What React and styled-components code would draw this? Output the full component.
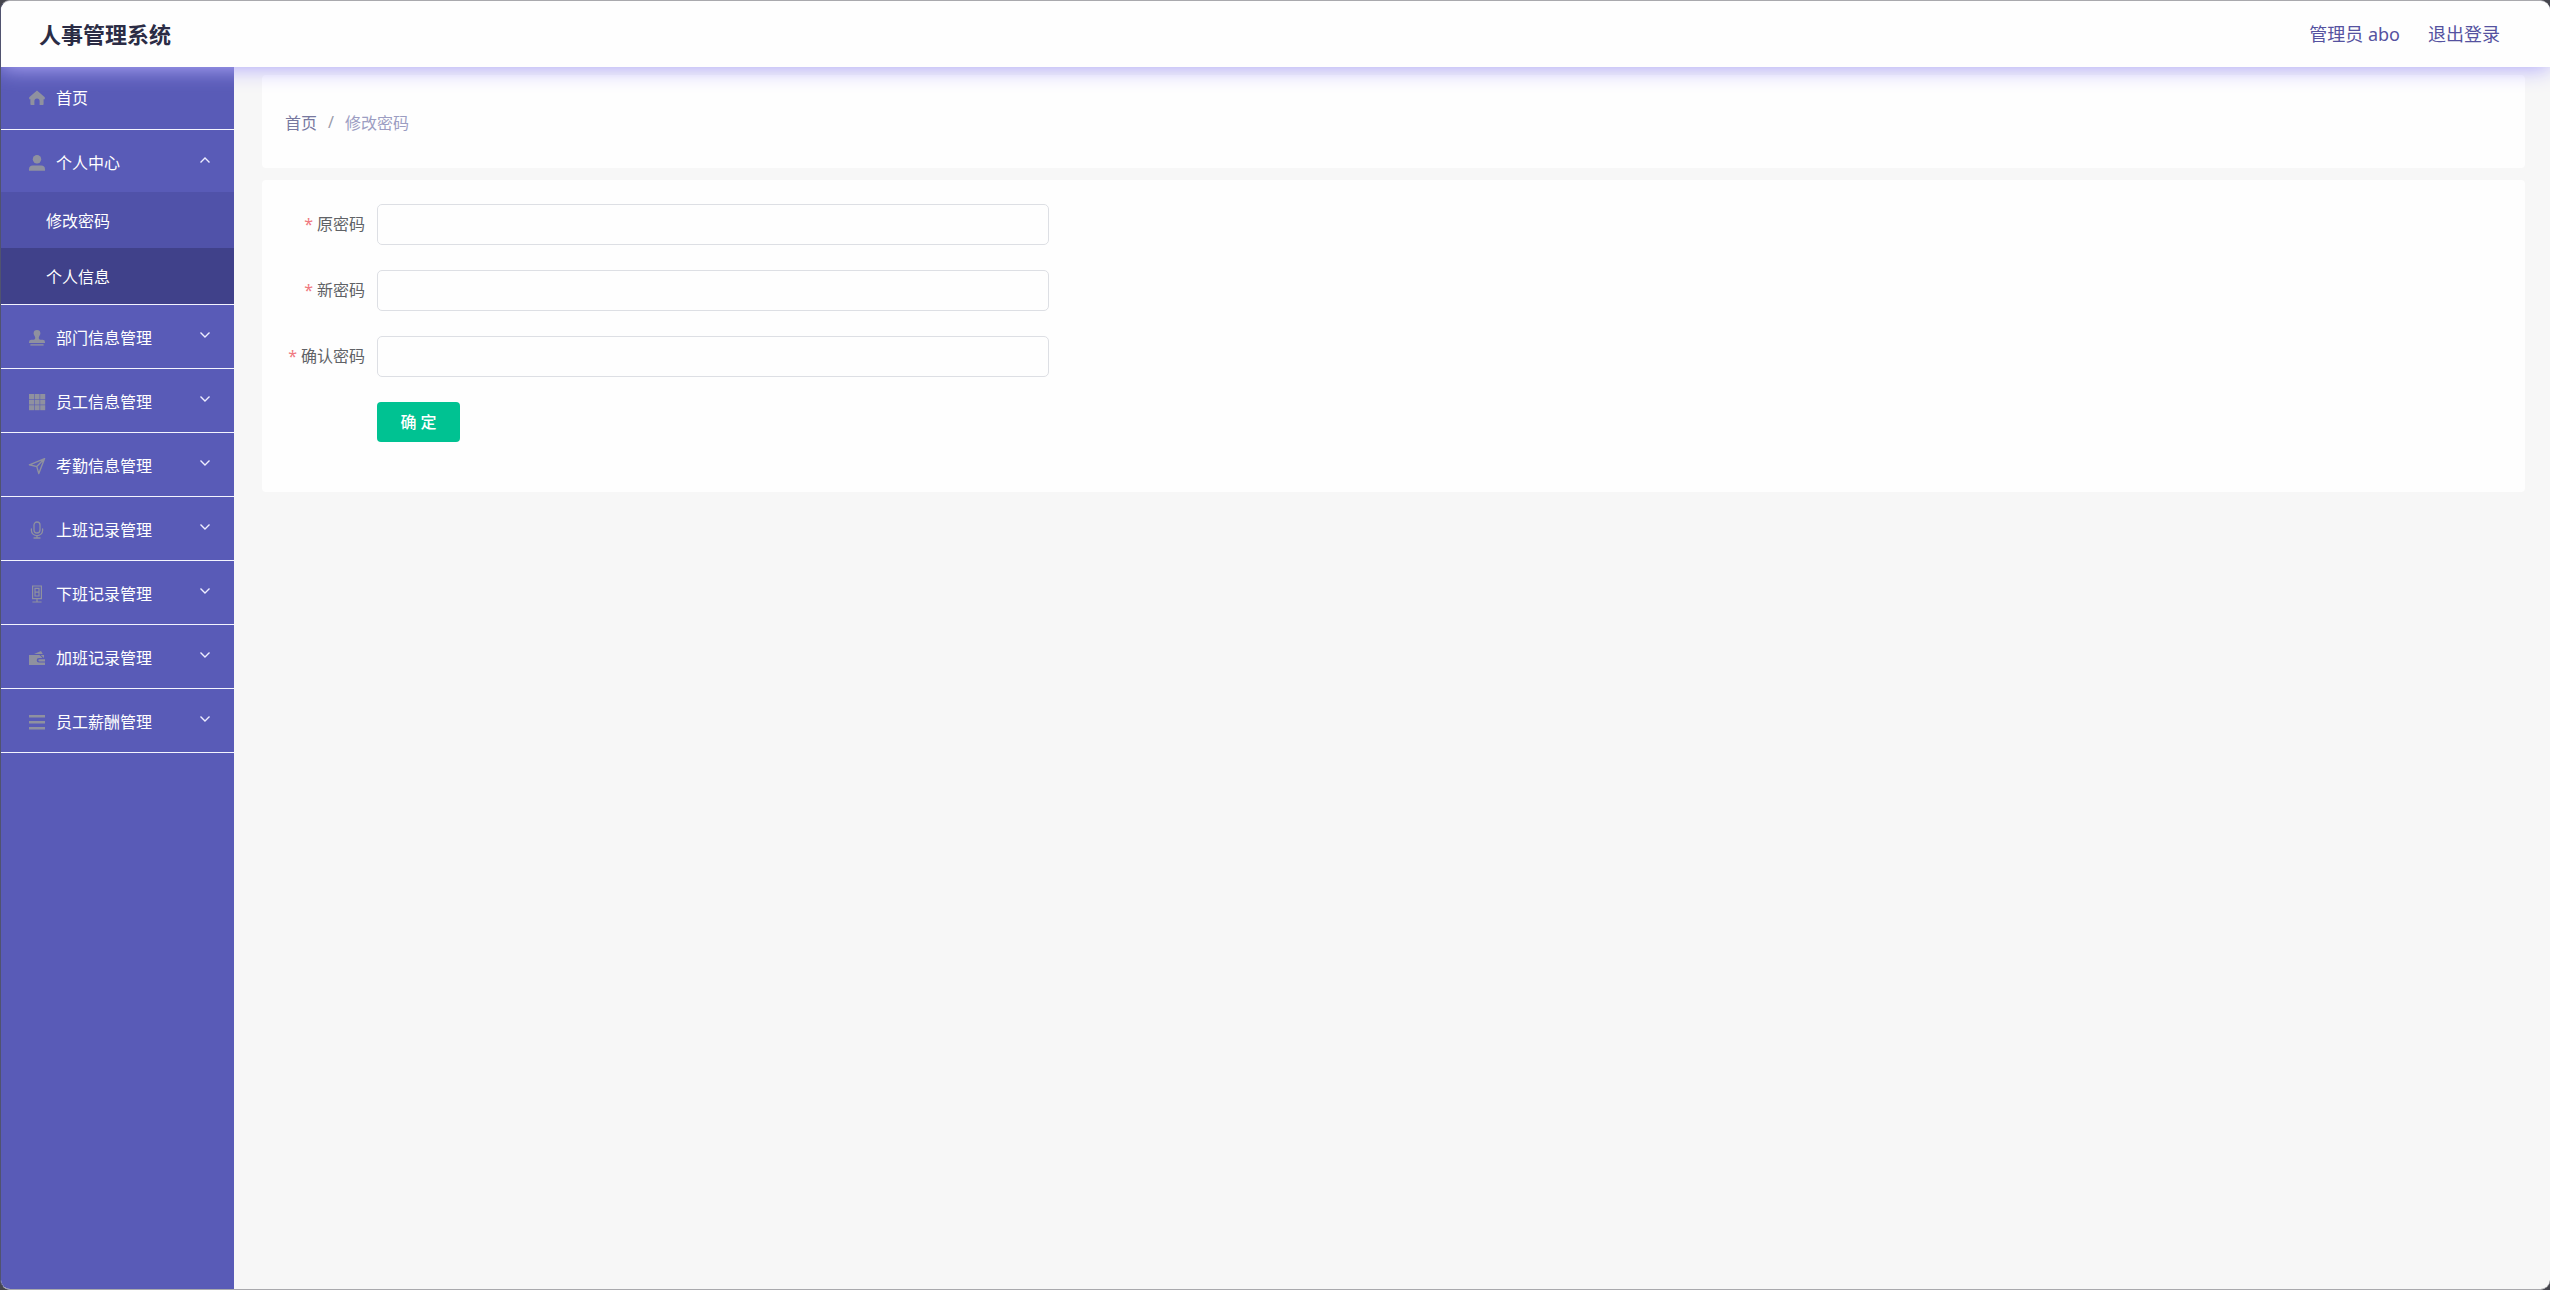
import React, { useState } from 'react';
import styled, { createGlobalStyle } from 'styled-components';

const menus = [
  { title: '部门信息管理', icon: 'stamp' },
  { title: '员工信息管理', icon: 'grid' },
  { title: '考勤信息管理', icon: 'position' },
  { title: '上班记录管理', icon: 'mic' },
  { title: '下班记录管理', icon: 'phone' },
  { title: '加班记录管理', icon: 'wallet' },
  { title: '员工薪酬管理', icon: 'bars' },
];

const fields = [
  { name: 'password', label: '原密码' },
  { name: 'newpassword', label: '新密码' },
  { name: 'repassword', label: '确认密码' },
];

const icons = {
  home: <path fill="currentColor" d="M9 1.4 1.2 8.2v2h1.2V15c0 .6.4 1 1 1h3v-4a2.600 2.600 0 0 1 5.200 0v4h3c.6 0 1-.4 1-1v-4.800h1.200v-2z" />,
  user: (
    <g fill="currentColor">
      <circle cx="9" cy="5.2" r="4.2" />
      <path d="M1 16.800v-1.600c0-2.400 1.400-3.600 3.600-3.600h8.800c2.200 0 3.600 1.200 3.600 3.600v1.600z" />
    </g>
  ),
  stamp: (
    <g fill="currentColor">
      <path d="M9 1a3.400 3.400 0 0 0-3.400 3.400c0 1.600 1.400 2.600 1.600 4.200.2 1.200-.4 2.200-1.600 2.200H3.400A2.400 2.400 0 0 0 1 13.200V14h16v-.8a2.400 2.400 0 0 0-2.400-2.400h-2.200c-1.200 0-1.800-1-1.600-2.200.2-1.600 1.600-2.600 1.600-4.200A3.400 3.400 0 0 0 9 1z" />
      <path d="M2.400 15.200h13.200v1.400H2.400z" />
    </g>
  ),
  grid: (
    <g fill="currentColor">
      {[1, 6.6, 12.2].map((y) => [1, 6.6, 12.2].map((x) => (
        <rect key={`${x}-${y}`} x={x} y={y} width="5" height="5" />
      )))}
    </g>
  ),
  position: (
    <path fill="none" stroke="currentColor" strokeWidth="1.400" strokeLinejoin="round" d="M16.600 1.600 1.400 7.800l7.400 1.800 2 7z M16.600 1.600 8.800 9.600" />
  ),
  mic: (
    <g fill="none" stroke="currentColor" strokeWidth="1.300" strokeLinecap="round">
      <rect x="6" y="1" width="6" height="11" rx="3" />
      <path d="M3.400 8v1.600a5.600 5 0 0 0 11.200 0V8M9 14.600V17M6 17h6" />
    </g>
  ),
  phone: (
    <g fill="none" stroke="currentColor" strokeWidth="1.200">
      <path d="M4.600 1h8.800v12.600H4.600zM7 3.400h4v7.600H7zM7 7.200h4M9 13.600v3M4.400 17h9.200" />
    </g>
  ),
  wallet: (
    <g fill="currentColor">
      <path d="M1 6h10.500l3 3H11a2 2 0 0 0 0 4.600h6V16H1zM6 4.900l7-3 1.800 3z" />
      <path d="M11.400 10.200H17v2.200h-5.600a1.100 1.100 0 0 1 0-2.200z" />
      <path d="M12.600 6H16v3z" />
    </g>
  ),
  bars: <path fill="currentColor" d="M1 2h16v2.400H1zM1 8h16v2.400H1zM1 14h16v2.400H1z" />,
};

function MenuIcon({ name }) {
  return (
    <IconSvg viewBox="0 0 18 18" aria-hidden="true">
      {icons[name]}
    </IconSvg>
  );
}

function Chevron({ open }) {
  return (
    <ChevronSvg viewBox="0 0 12 12" aria-hidden="true">
      <path d={open ? 'M1.500 8.500 6 4l4.500 4.500' : 'M1.500 3.500 6 8l4.500-4.500'} />
    </ChevronSvg>
  );
}

export default function App() {
  const [open, setOpen] = useState(true);
  const [form, setForm] = useState({ password: '', newpassword: '', repassword: '' });

  const onChange = (e) => {
    setForm({ ...form, [e.target.name]: e.target.value });
  };

  return (
    <>
      <GlobalStyle />
      <Window>
        <Header>
          <Title>人事管理系统</Title>
          <UserLinks>
            <a href="#user">管理员 abo</a>
            <a href="#logout">退出登录</a>
          </UserLinks>
        </Header>
        <Body>
          <Sidebar>
            <MenuGroup>
              <HomeLink href="#home">
                <MenuIcon name="home" />
                <span>首页</span>
              </HomeLink>
            </MenuGroup>
            <MenuGroup>
              <CenterButton type="button" aria-expanded={open} onClick={() => setOpen(!open)}>
                <MenuIcon name="user" />
                <span>个人中心</span>
                <Chevron open={open} />
              </CenterButton>
              {open && (
                <>
                  <SubLink href="#password">修改密码</SubLink>
                  <SubLink href="#profile" $dark>个人信息</SubLink>
                </>
              )}
            </MenuGroup>
            {menus.map((menu) => (
              <MenuGroup key={menu.title}>
                <MenuButton type="button" aria-expanded={false}>
                  <MenuIcon name={menu.icon} />
                  <span>{menu.title}</span>
                  <Chevron />
                </MenuButton>
              </MenuGroup>
            ))}
          </Sidebar>
          <Main>
            <Breadcrumb aria-label="breadcrumb">
              <a href="#home">首页</a>
              <Slash>/</Slash>
              <span>修改密码</span>
            </Breadcrumb>
            <FormPanel onSubmit={(e) => e.preventDefault()}>
              {fields.map((field) => (
                <FormRow key={field.name}>
                  <Label htmlFor={field.name}>
                    <Star>*</Star>
                    {field.label}
                  </Label>
                  <Input
                    id={field.name}
                    name={field.name}
                    type="password"
                    value={form[field.name]}
                    onChange={onChange}
                  />
                </FormRow>
              ))}
              <Actions>
                <SubmitButton type="submit">确 定</SubmitButton>
              </Actions>
            </FormPanel>
          </Main>
        </Body>
      </Window>
    </>
  );
}

const GlobalStyle = createGlobalStyle`
  * {
    box-sizing: border-box;
  }

  body {
    margin: 0;
    background: #45454d;
    font-family: "Noto Sans", "Noto Sans CJK SC", sans-serif;
    font-size: 16px;
  }

  a {
    color: inherit;
    text-decoration: none;
  }

  button, input {
    font-family: inherit;
    font-size: inherit;
  }
`;

const Window = styled.div`
  display: flex;
  flex-direction: column;
  min-height: 100vh;
  overflow: hidden;
  border: 1px solid #a9a9ad;
  border-left-color: #50536f;
  border-right: 0;
  border-radius: 10px;
  background: #f7f7f7;
`;

const Header = styled.header`
  position: relative;
  z-index: 1;
  display: flex;
  align-items: center;
  justify-content: space-between;
  height: 66px;
  padding: 0 50px 3px 38px;
  background: #fefefe;
  box-shadow: 0 2px 20px #b0a9fa;
`;

const Title = styled.h1`
  margin: 0;
  font-size: 22px;
  font-weight: 700;
  color: #2b2c45;
`;

const UserLinks = styled.nav`
  display: flex;
  gap: 28px;
  font-size: 18px;
  color: #5552a0;
`;

const Body = styled.div`
  display: flex;
  flex: 1;
`;

const Sidebar = styled.nav`
  flex: 0 0 233px;
  background: #595bb7;
  color: #fff;
`;

const MenuGroup = styled.div`
  border-bottom: 1px solid #f4f4ff;
`;

const MenuButton = styled.button`
  display: flex;
  align-items: center;
  gap: 10px;
  width: 100%;
  height: 63px;
  padding: 0 23px 0 27px;
  border: 0;
  background: transparent;
  color: inherit;
  text-align: left;
  cursor: pointer;

  &:hover {
    background: #4f51a8;
  }
`;

const CenterButton = styled(MenuButton)`
  height: 62px;
  padding-top: 2px;
`;

const HomeLink = styled(CenterButton).attrs({ as: 'a' })`
  padding-top: 0;
  padding-bottom: 2px;
`;

const SubLink = styled.a`
  display: flex;
  align-items: center;
  height: 56px;
  padding-left: 45px;
  background: ${(props) => (props.$dark ? '#40418a' : '#5052a9')};
`;

const IconSvg = styled.svg`
  flex: none;
  width: 18px;
  height: 18px;
  margin-top: 2px;
  color: #8f919f;
`;

const ChevronSvg = styled.svg`
  width: 12px;
  height: 12px;
  margin-left: auto;
  margin-bottom: 4px;
  fill: none;
  stroke: #eeeeff;
  stroke-width: 1.4;
`;

const Main = styled.main`
  display: flex;
  flex: 1;
  flex-direction: column;
  gap: 12px;
  min-width: 0;
  padding: 8px 25px 24px 28px;
`;

const Breadcrumb = styled.nav`
  display: flex;
  align-items: center;
  gap: 11px;
  height: 93px;
  padding: 0 23px;
  border-radius: 4px;
  background: #fefefe;
  color: #9c9dc2;

  a {
    color: #77789f;
  }
`;

const Slash = styled.span`
  color: #999bab;
`;

const FormPanel = styled.form`
  display: flex;
  flex-direction: column;
  gap: 25px;
  padding: 24px 25px 50px;
  border-radius: 4px;
  background: #fefefe;
`;

const FormRow = styled.div`
  display: flex;
  align-items: center;
`;

const Label = styled.label`
  flex: 0 0 90px;
  padding-right: 12px;
  padding-bottom: 3px;
  text-align: right;
  white-space: nowrap;
  color: #606266;
`;

const Star = styled.span`
  margin-right: 4px;
  color: #f07880;
`;

const Input = styled.input`
  width: 100%;
  max-width: 672px;
  height: 41px;
  padding: 0 15px;
  border: 1px solid #dddfe4;
  border-radius: 5px;
  outline: none;
  background: #fefefe;
  color: #606266;

  &:focus {
    border-color: #00c292;
  }
`;

const Actions = styled.div`
  padding-left: 90px;
`;

const SubmitButton = styled.button`
  display: block;
  width: 83px;
  height: 40px;
  padding: 0 0 2px;
  border: 0;
  border-radius: 4px;
  background: #00c292;
  color: #fff;
  font-weight: 500;
  cursor: pointer;
`;
